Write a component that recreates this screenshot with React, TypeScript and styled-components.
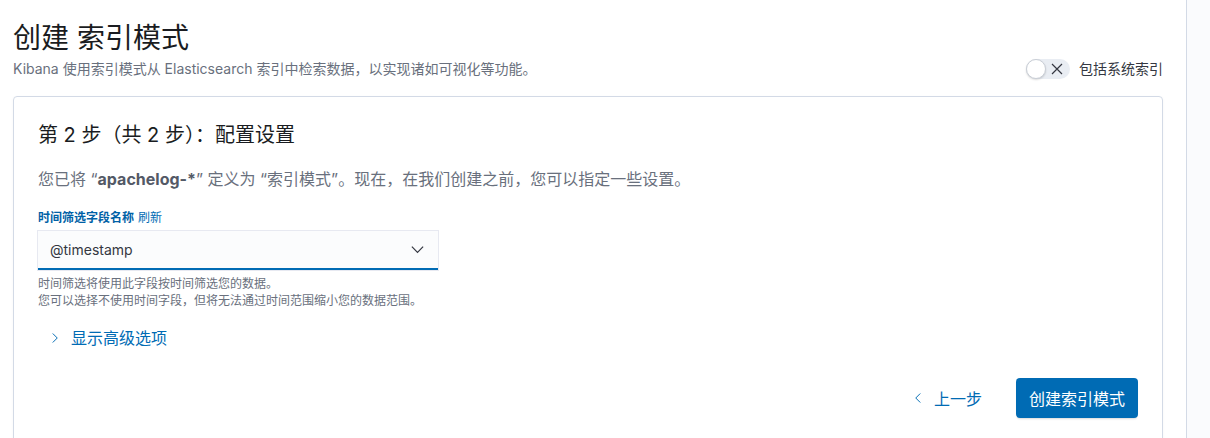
import * as React from "react";
import styled, { createGlobalStyle } from "styled-components";

const GlobalStyle = createGlobalStyle`
  html, body {
    margin: 0;
    padding: 0;
    background: #fafbfd;
  }
  body {
    font-family: "Inter", "Noto Sans CJK SC", sans-serif;
    color: #343741;
  }
`;

const Shell = styled.div`
  display: flex;
  height: 438px;
  overflow: hidden;
`;

const Page = styled.div`
  width: 1187px;
  box-sizing: border-box;
  background: #fff;
  border-right: 1px solid #d3dae6;
  padding: 18px 23px 0 13px;
  height: 438px;
  overflow: hidden;
`;

const Header = styled.div`
  display: flex;
  align-items: flex-end;
  justify-content: space-between;
`;

const Title = styled.h1`
  margin: 0;
  font-size: 28px;
  line-height: 40px;
  font-weight: 400;
  color: #1a1c21;
`;

const Subtitle = styled.p`
  margin: 0;
  font-size: 14px;
  line-height: 22px;
  color: #69707d;
`;

const ToggleRow = styled.label`
  display: flex;
  align-items: center;
  gap: 9px;
  font-size: 14px;
  line-height: 22px;
  color: #343741;
`;

const Track = styled.span`
  position: relative;
  width: 44px;
  height: 20px;
  border-radius: 10px;
  background: #e9edf3;
  display: flex;
  align-items: center;
  justify-content: flex-end;
  padding-right: 7px;
  box-sizing: border-box;
`;

const Knob = styled.span`
  position: absolute;
  left: 0;
  top: 0;
  width: 20px;
  height: 20px;
  border-radius: 50%;
  background: #fff;
  box-sizing: border-box;
  border: 1px solid #c9ced6;
  box-shadow: 0 1px 2px rgba(0, 0, 0, 0.15);
`;

const Panel = styled.div`
  margin-top: 16px;
  border: 1px solid #d3dae6;
  border-radius: 4px;
  padding: 24px;
  box-shadow: 0 1px 3px rgba(0, 0, 0, 0.04);
  min-height: 360px;
`;

const StepTitle = styled.h2`
  margin: 0;
  font-size: 20px;
  line-height: 28px;
  font-weight: 400;
  color: #1a1c21;
`;

const Description = styled.p`
  margin: 18px 0 0;
  font-size: 16px;
  line-height: 24px;
  color: #69707d;

  strong {
    color: #535966;
    font-weight: 700;
  }
`;

const FieldLabel = styled.div`
  margin-top: 18px;
  font-size: 12px;
  line-height: 18px;
  display: flex;
  gap: 4px;
`;

const LabelText = styled.span`
  font-weight: 700;
  color: #0061a6;
`;

const LinkText = styled.span`
  color: #006bb4;
`;

const Select = styled.div`
  margin-top: 4px;
  width: 400px;
  height: 39px;
  box-sizing: border-box;
  background: #fbfcfd;
  box-shadow: 0 0 0 1px rgba(15, 39, 118, 0.1);
  border-bottom: 2px solid #006bb4;
  display: flex;
  align-items: center;
  justify-content: space-between;
  padding: 0 13px 0 12px;
  font-size: 14px;
  color: #343741;
`;

const Help = styled.div`
  margin-top: 5px;
  font-size: 12px;
  line-height: 17px;
  color: #69707d;
`;

const Advanced = styled.div`
  margin-top: 17px;
  display: flex;
  align-items: center;
  gap: 10px;
  font-size: 16px;
  line-height: 24px;
  color: #006bb4;
  padding-left: 11px;
`;

const Footer = styled.div`
  margin-top: 28px;
  display: flex;
  justify-content: flex-end;
  align-items: center;
  gap: 26px;
`;

const EmptyButton = styled.button`
  border: none;
  background: none;
  display: flex;
  align-items: center;
  gap: 10px;
  font-family: inherit;
  font-size: 16px;
  color: #006bb4;
  padding: 0 8px;
  height: 40px;
`;

const PrimaryButton = styled.button`
  border: none;
  border-radius: 4px;
  background: #006bb4;
  color: #fff;
  font-family: inherit;
  font-size: 16px;
  height: 40px;
  padding: 0 13px;
  box-shadow: 0 2px 2px -1px rgba(0, 0, 0, 0.15);
`;

const Chevron = ({ dir, size = 12 }: { dir: "down" | "right" | "left"; size?: number }) => {
  const paths = {
    down: "M2 5 L8 11 L14 5",
    right: "M5 2 L11 8 L5 14",
    left: "M11 2 L5 8 L11 14",
  };
  return (
    <svg width={size} height={size} viewBox="0 0 16 16" fill="none">
      <path d={paths[dir]} stroke="currentColor" strokeWidth="1.3" />
    </svg>
  );
};

const App = () => (
  <>
    <GlobalStyle />
    <Shell>
      <Page>
        <Header>
          <div>
            <Title>创建 索引模式</Title>
            <Subtitle>
              Kibana 使用索引模式从 Elasticsearch 索引中检索数据，以实现诸如可视化等功能。
            </Subtitle>
          </div>
          <ToggleRow>
            <Track>
              <Knob />
              <svg width="12" height="12" viewBox="0 0 12 12">
                <path d="M1 1 L11 11 M11 1 L1 11" stroke="#343741" strokeWidth="1.2" />
              </svg>
            </Track>
            包括系统索引
          </ToggleRow>
        </Header>
        <Panel>
          <StepTitle>第 2 步（共 2 步）：配置设置</StepTitle>
          <Description>
            您已将 “<strong>apachelog-*</strong>” 定义为 “索引模式”。现在，在我们创建之前，您可以指定一些设置。
          </Description>
          <FieldLabel>
            <LabelText>时间筛选字段名称</LabelText>
            <LinkText>刷新</LinkText>
          </FieldLabel>
          <Select>
            <span>@timestamp</span>
            <span style={{ color: "#343741", display: "flex" }}>
              <Chevron dir="down" size={15} />
            </span>
          </Select>
          <Help>
            时间筛选将使用此字段按时间筛选您的数据。
            <br />
            您可以选择不使用时间字段，但将无法通过时间范围缩小您的数据范围。
          </Help>
          <Advanced>
            <Chevron dir="right" />
            显示高级选项
          </Advanced>
          <Footer>
            <EmptyButton>
              <Chevron dir="left" />
              上一步
            </EmptyButton>
            <PrimaryButton>创建索引模式</PrimaryButton>
          </Footer>
        </Panel>
      </Page>
    </Shell>
  </>
);

export default App;
